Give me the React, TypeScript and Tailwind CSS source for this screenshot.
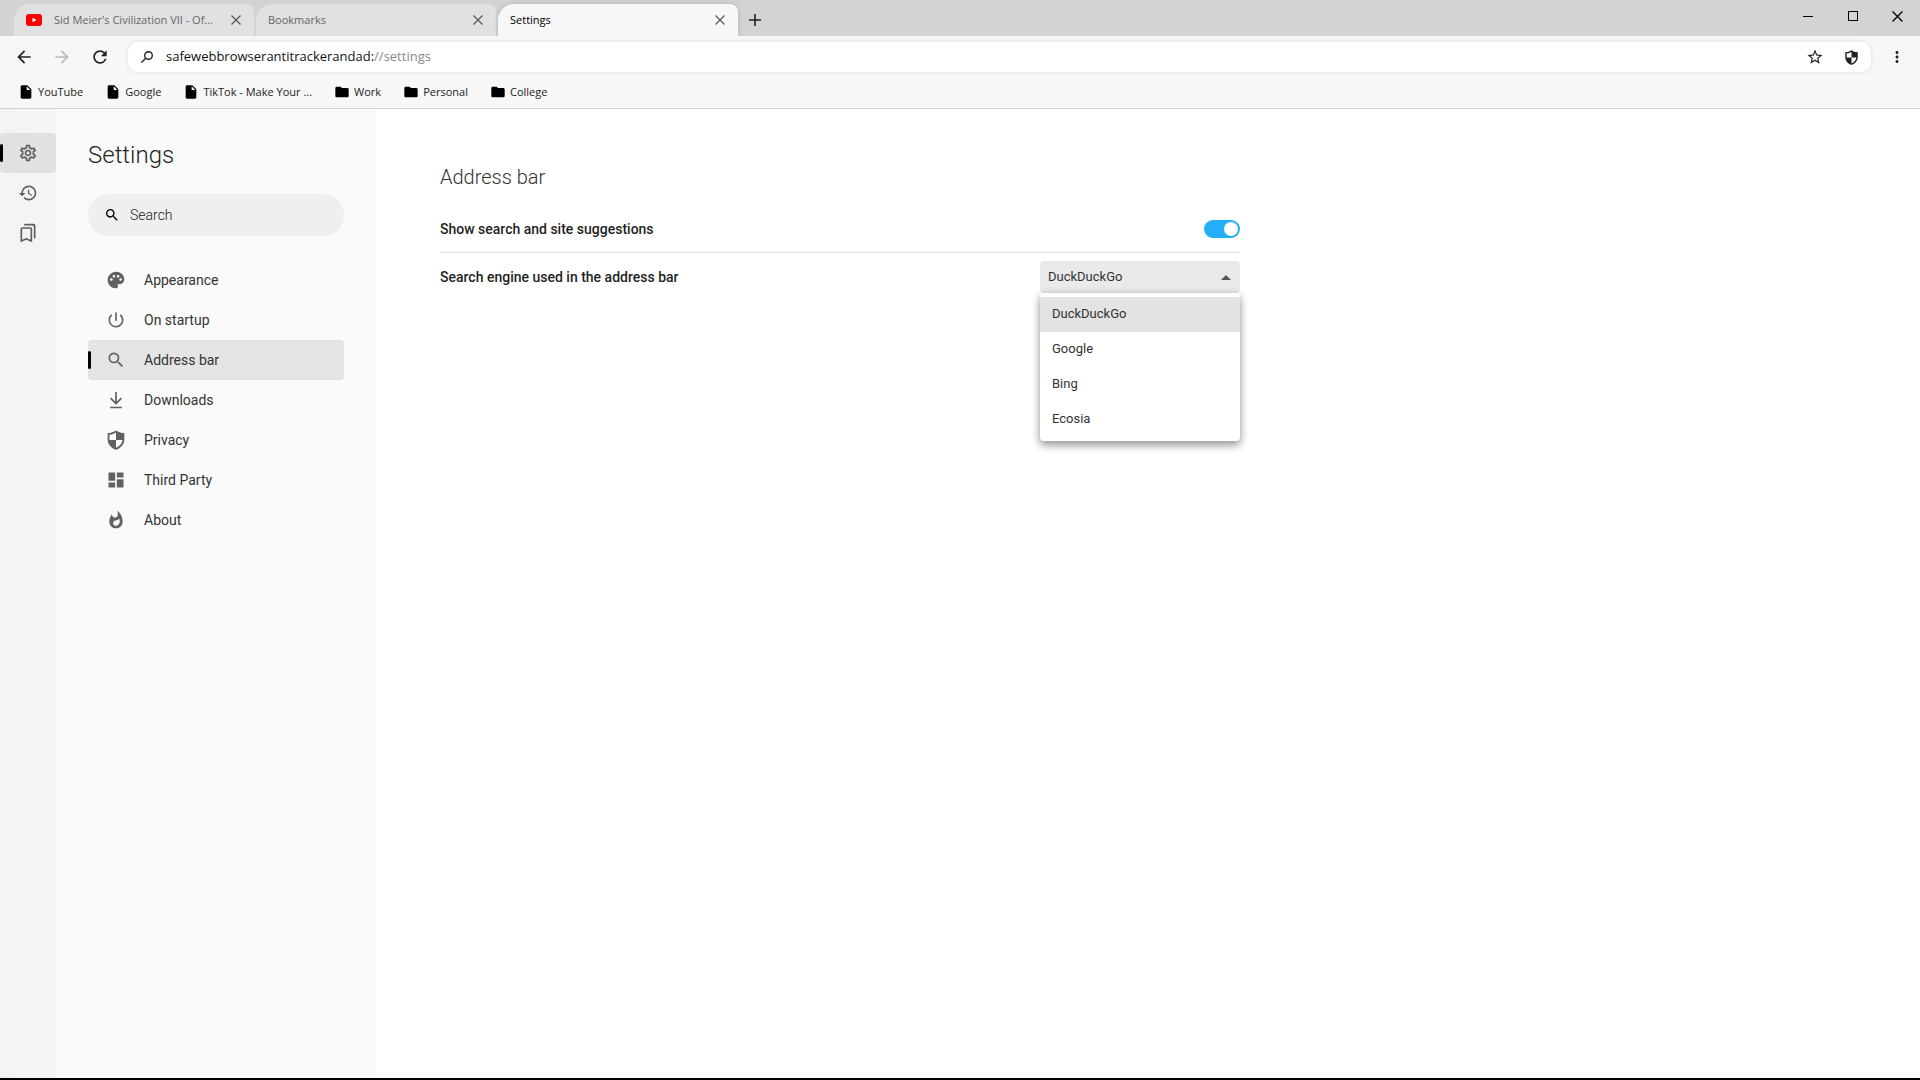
import React, { useState } from "react";
import {
  MdArrowBack,
  MdArrowForward,
  MdDashboard,
  MdFolder,
  MdHistory,
  MdInsertDriveFile,
  MdMoreVert,
  MdOutlineBookmarks,
  MdOutlineSettings,
  MdPalette,
  MdPowerSettingsNew,
  MdRefresh,
  MdSearch,
  MdStarBorder,
  MdWhatshot,
} from "react-icons/md";

const ENGINES = ["DuckDuckGo", "Google", "Bing", "Ecosia"];

const BOOKMARKS = [
  { title: "YouTube", folder: false },
  { title: "Google", folder: false },
  { title: "TikTok - Make Your ...", folder: false },
  { title: "Work", folder: true },
  { title: "Personal", folder: true },
  { title: "College", folder: true },
];

const ShieldIcon = ({ size }: any) => (
  <svg width={size} height={size} viewBox="0 0 24 24" fill="currentColor">
    <path
      fillRule="evenodd"
      d="M12 0.500c-2.800 2-6 2.900-10 3.200v7.300c0 6 4.200 10.800 10 12.700 5.800-1.900 10-6.700 10-12.700V3.700c-4-.3-7.200-1.200-10-3.200zM12 3v9H4.200V5.700c3-.4 5.600-1.300 7.800-2.700zM12 12h7.800c-.5 4.400-3.500 7.700-7.800 9.400V12z"
    />
  </svg>
);

const DownloadIcon = ({ size }: any) => (
  <svg
    width={size}
    height={size}
    viewBox="0 0 24 24"
    fill="none"
    stroke="currentColor"
    strokeWidth="2"
  >
    <path d="M12 2.500v13.500M5.500 9.700l6.500 6.500 6.500-6.500M5 21h14" />
  </svg>
);

const CloseIcon = ({ size }: any) => (
  <svg
    width={size}
    height={size}
    viewBox="0 0 10 10"
    fill="none"
    stroke="currentColor"
    strokeWidth="1.200"
  >
    <path d="M.5.5l9 9M9.500.5l-9 9" />
  </svg>
);

const NAV = [
  { title: "Appearance", icon: MdPalette },
  { title: "On startup", icon: MdPowerSettingsNew },
  { title: "Address bar", icon: MdSearch },
  { title: "Downloads", icon: DownloadIcon },
  { title: "Privacy", icon: ShieldIcon },
  { title: "Third Party", icon: MdDashboard },
  { title: "About", icon: MdWhatshot },
];

const RAIL = [
  { title: "Settings", icon: MdOutlineSettings },
  { title: "History", icon: MdHistory },
  { title: "Bookmarks", icon: MdOutlineBookmarks },
];

export default function App() {
  const [section, setSection] = useState("Address bar");

  return (
    <div className="flex min-h-screen flex-col border-b-2 border-black bg-white font-['Roboto',sans-serif] text-black">
      <div className="bg-[#f7f7f7] font-['Open_Sans','Noto_Sans',sans-serif]">
        <TitleBar />
        <Toolbar />
        <BookmarksBar />
      </div>

      <div className="flex flex-1">
        <nav
          aria-label="Pages"
          className="w-14 shrink-0 bg-linear-to-r from-[#f3f3f3] to-[#f5f5f5] pt-6"
        >
          {RAIL.map((item) => (
            <RailButton
              key={item.title}
              item={item}
              active={item.title === "Settings"}
            />
          ))}
        </nav>

        <aside className="w-80 shrink-0 bg-[#fafafa] px-8 pt-[30px]">
          <h1 className="text-2xl leading-8 font-light text-[#1f1f1f]">
            Settings
          </h1>
          <label className="mt-[23px] mb-6 flex h-[42px] items-center gap-2.5 rounded-full bg-[#efefef] pl-4">
            <MdSearch size={16} />
            <input
              type="search"
              aria-label="Search settings"
              placeholder="Search"
              className="min-w-0 flex-1 bg-transparent text-sm font-light outline-none placeholder:text-[#222]"
            />
          </label>
          {NAV.map((item) => (
            <NavButton
              key={item.title}
              item={item}
              active={item.title === section}
              onClick={() => setSection(item.title)}
            />
          ))}
        </aside>

        <main className="flex-1 px-16 pt-14">
          <AddressBarSettings />
        </main>
      </div>
    </div>
  );
}

const TitleBar = () => (
  <header className="flex h-9 items-start justify-between bg-[#d3d3d3] pl-3.5">
    <div className="flex items-end gap-0.5 pt-1">
      <Tab title="Sid Meier's Civilization VII - Of..." youtube />
      <Tab title="Bookmarks" />
      <Tab title="Settings" active />
      <button
        aria-label="New tab"
        className="flex h-8 w-[30px] items-center justify-center"
      >
        <svg width="12" height="12" viewBox="0 0 12 12" stroke="#222">
          <path d="M6 0v12M0 6h12" strokeWidth="1.600" />
        </svg>
      </button>
    </div>
    <div className="flex h-8">
      <button
        aria-label="Minimize"
        className="flex w-[45px] items-center justify-center"
      >
        <span className="h-px w-2.5 bg-black" />
      </button>
      <button
        aria-label="Maximize"
        className="flex w-[45px] items-center justify-center"
      >
        <span className="h-2.5 w-2.5 border border-black" />
      </button>
      <button
        aria-label="Close"
        className="flex w-[45px] items-center justify-center"
      >
        <CloseIcon size={11} />
      </button>
    </div>
  </header>
);

const Tab = ({ title, active, youtube }: any) => (
  <div
    className={`flex h-8 w-60 items-center rounded-tl-2xl rounded-tr-lg px-3 text-[11px] ${
      active
        ? "bg-[#f7f7f7] text-black shadow-[0_0_5px_rgba(0,0,0,0.15)] [clip-path:inset(-6px_-6px_0px_-6px)]"
        : "bg-[#e1e1e1] text-[#666]"
    }`}
  >
    {youtube && (
      <svg width="16" height="12" viewBox="0 0 16 12" className="mr-3 shrink-0">
        <rect width="16" height="12" rx="3" fill="#f00" />
        <path d="M6.500 3.700v4.600l4-2.300z" fill="#fff" />
      </svg>
    )}
    <span className="flex-1 truncate">{title}</span>
    <button aria-label={`Close ${title}`} className="p-px text-[#555]">
      <CloseIcon size={10} />
    </button>
  </div>
);

const Toolbar = () => (
  <div className="flex items-center px-3.5 pt-1.5">
    <div className="flex flex-1 items-center gap-[18px]">
      <button aria-label="Back" className="text-[#222]">
        <MdArrowBack size={20} />
      </button>
      <button aria-label="Forward" disabled className="text-[#bbb]">
        <MdArrowForward size={20} />
      </button>
      <button aria-label="Reload" className="text-[#222]">
        <MdRefresh size={20} />
      </button>
      <div className="flex h-[30px] flex-1 items-center rounded-[10px] bg-white px-3 shadow-[0_0_5px_rgba(0,0,0,0.1)]">
        <svg
          width="14"
          height="14"
          viewBox="0 0 14 14"
          fill="none"
          stroke="#222"
          strokeWidth="1.400"
        >
          <circle cx="8.500" cy="5.500" r="3.800" />
          <path d="M5.800 8.200L1.400 12.600" />
        </svg>
        <input
          aria-label="Address"
          defaultValue="safewebbrowserantitrackerandad:"
          className="ml-3 field-sizing-content bg-transparent text-[13px] text-[#111] outline-none"
        />
        <span className="flex-1 text-[13px] text-[#888]">//settings</span>
        <button aria-label="Bookmark this page" className="text-[#222]">
          <MdStarBorder size={18} />
        </button>
        <button aria-label="Shield" className="ml-5 text-[#222]">
          <ShieldIcon size={15} />
        </button>
      </div>
    </div>
    <button aria-label="Menu" className="ml-[17px] text-[#222]">
      <MdMoreVert size={18} />
    </button>
  </div>
);

const BookmarksBar = () => (
  <div className="flex h-[37px] items-center gap-[22px] border-b border-[#d4d4d4] px-[18px] pt-1">
    {BOOKMARKS.map((b) => (
      <a
        key={b.title}
        href="#"
        className="flex items-center gap-1 text-[11px] text-[#222]"
      >
        {b.folder ? (
          <MdFolder size={16} color="#000" />
        ) : (
          <MdInsertDriveFile size={16} color="#000" />
        )}
        {b.title}
      </a>
    ))}
  </div>
);

const RailButton = ({ item, active }: any) => (
  <button
    aria-label={item.title}
    className={`relative flex h-10 w-full items-center justify-center rounded text-[#5f5f5f] ${
      active ? "bg-[#e1e1e1]" : ""
    }`}
  >
    {active && <ActiveMark />}
    <item.icon size={20} />
  </button>
);

const NavButton = ({ item, active, onClick }: any) => (
  <button
    onClick={onClick}
    className={`relative flex h-10 w-full items-center gap-[18px] rounded pl-[18px] text-sm text-[#333] ${
      active ? "bg-[#e4e4e4]" : ""
    }`}
  >
    {active && <ActiveMark />}
    <span className="text-[#616161]">
      <item.icon size={20} />
    </span>
    {item.title}
  </button>
);

const ActiveMark = () => (
  <span className="absolute top-[11px] left-0 h-[18px] w-[3px] rounded-xs bg-black" />
);

const AddressBarSettings = () => {
  const [suggest, setSuggest] = useState(true);
  const [engine, setEngine] = useState("DuckDuckGo");
  const [open, setOpen] = useState(true);

  const pick = (name: string) => {
    setEngine(name);
    setOpen(false);
  };

  return (
    <section className="max-w-[800px]">
      <h2 className="text-xl leading-6 font-light text-[#333]">Address bar</h2>

      <div className="mt-4 flex h-12 items-center justify-between border-b border-[#dfdfdf] text-sm">
        <label htmlFor="suggest" className="font-medium text-[#1f1f1f]">
          Show search and site suggestions
        </label>
        <input
          id="suggest"
          type="checkbox"
          role="switch"
          checked={suggest}
          onChange={(e) => setSuggest(e.target.checked)}
          className="h-[18px] w-9 appearance-none rounded-full bg-[#bbb] p-0.5 before:block before:h-3.5 before:w-3.5 before:rounded-full before:bg-white checked:bg-[#22aff7] checked:before:ml-[18px]"
        />
      </div>

      <div className="flex h-12 items-center justify-between text-sm">
        <label htmlFor="engine" className="font-medium text-[#1f1f1f]">
          Search engine used in the address bar
        </label>
        <div className="relative w-[200px]">
          <select
            id="engine"
            value={engine}
            onChange={(e) => setEngine(e.target.value)}
            onMouseDown={(e) => {
              e.preventDefault();
              setOpen(!open);
            }}
            className="block h-8 w-full appearance-none rounded bg-[#eaeaea] px-2 text-[13px] text-[#333]"
          >
            {ENGINES.map((name) => (
              <option key={name}>{name}</option>
            ))}
          </select>
          <svg
            width="10"
            height="5"
            viewBox="0 0 10 5"
            className={`pointer-events-none absolute top-3.5 right-[9px] ${
              open ? "" : "rotate-180"
            }`}
          >
            <path d="M0 5l5-5 5 5z" fill="#555" />
          </svg>
          {open && (
            <ul
              role="listbox"
              aria-label="Search engine"
              className="absolute top-8 left-0 w-full rounded bg-white py-1 text-[13px] text-[#333] shadow-[0_5px_8px_rgba(0,0,0,0.3),0_1px_8px_rgba(0,0,0,0.2)]"
            >
              {ENGINES.map((name) => (
                <li
                  key={name}
                  role="option"
                  aria-selected={name === engine}
                  onClick={() => pick(name)}
                  className={`flex h-[35px] items-center px-3 ${
                    name === engine ? "bg-[#e3e3e3]" : "hover:bg-[#f0f0f0]"
                  }`}
                >
                  {name}
                </li>
              ))}
            </ul>
          )}
        </div>
      </div>
    </section>
  );
};
